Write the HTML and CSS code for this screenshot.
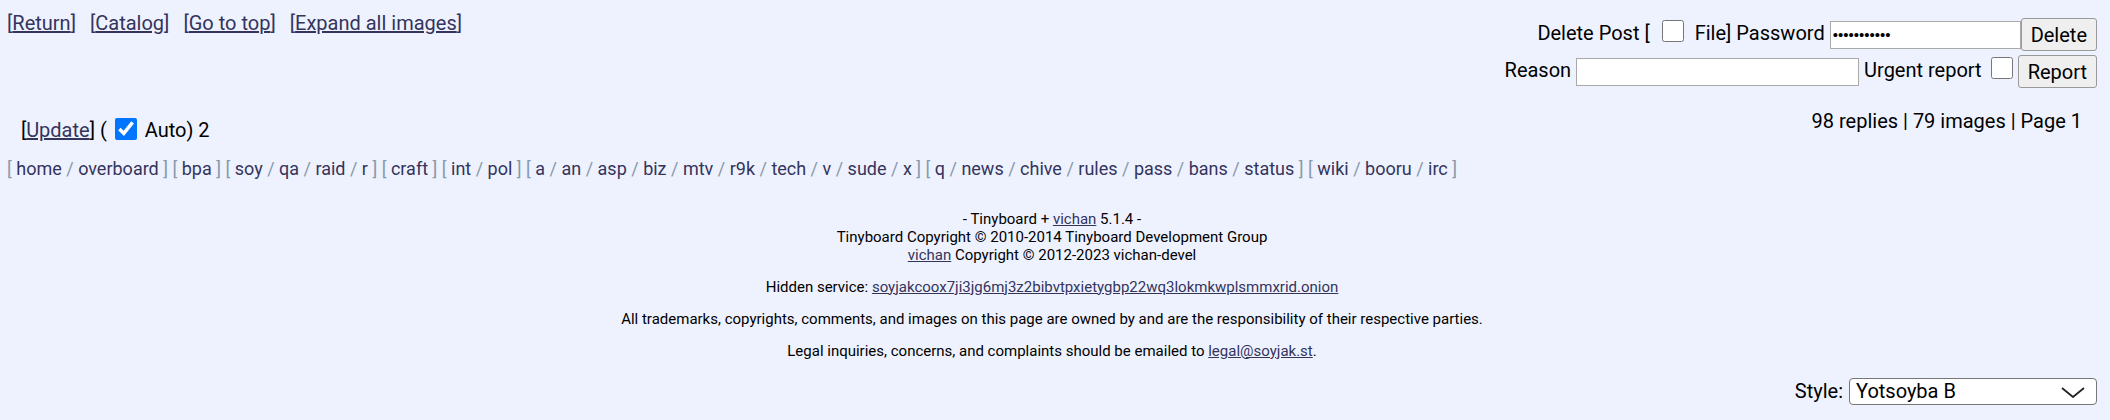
FILE: index.html
```html
<!DOCTYPE html>
<html>
<head>
    <meta name="viewport" content="width=device-width, initial-scale=1.0">
    <title>/soy/ - Thread</title>
    <link rel="stylesheet" href="styles.css">
</head>
<body>
    <div class="top-bar">
        <div class="nav-links">
            <span>[<a href="#">Return</a>]</span>
            <span>[<a href="#">Catalog</a>]</span>
            <span>[<a href="#">Go to top</a>]</span>
            <span>[<a href="#">Expand all images</a>]</span>
        </div>
        <form class="delete">
            <div class="delete-row">Delete Post [<input type="checkbox" class="box"> File] Password <input type="password" class="pass" value="abcdefghijk"><button type="button">Delete</button></div>
            <div class="delete-row">Reason <input type="text" class="reason"> Urgent report <input type="checkbox" class="box urgent"><button type="button">Report</button></div>
        </form>
    </div>
    <div class="thread-bar">
        <div class="update">[<a href="#">Update</a>] ( <input type="checkbox" class="box" checked> Auto) 2</div>
        <div class="stats">98 replies | 79 images | Page 1</div>
    </div>
    <div class="boardlist">
        <span>[ <a href="#">home</a> / <a href="#">overboard</a> ]</span>
        <span>[ <a href="#">bpa</a> ]</span>
        <span>[ <a href="#">soy</a> / <a href="#">qa</a> / <a href="#">raid</a> / <a href="#">r</a> ]</span>
        <span>[ <a href="#">craft</a> ]</span>
        <span>[ <a href="#">int</a> / <a href="#">pol</a> ]</span>
        <span>[ <a href="#">a</a> / <a href="#">an</a> / <a href="#">asp</a> / <a href="#">biz</a> / <a href="#">mtv</a> / <a href="#">r9k</a> / <a href="#">tech</a> / <a href="#">v</a> / <a href="#">sude</a> / <a href="#">x</a> ]</span>
        <span>[ <a href="#">q</a> / <a href="#">news</a> / <a href="#">chive</a> / <a href="#">rules</a> / <a href="#">pass</a> / <a href="#">bans</a> / <a href="#">status</a> ]</span>
        <span>[ <a href="#">wiki</a> / <a href="#">booru</a> / <a href="#">irc</a> ]</span>
    </div>
    <footer>
        <p>- Tinyboard + <a href="#">vichan</a> 5.1.4 -<br>
        Tinyboard Copyright &copy; 2010-2014 Tinyboard Development Group<br>
        <a href="#">vichan</a> Copyright &copy; 2012-2023 vichan-devel</p>
        <p>Hidden service: <a href="#">soyjakcoox7ji3jg6mj3z2bibvtpxietygbp22wq3lokmkwplsmmxrid.onion</a></p>
        <p>All trademarks, copyrights, comments, and images on this page are owned by and are the responsibility of their respective parties.</p>
        <p>Legal inquiries, concerns, and complaints should be emailed to <a href="#">legal@soyjak.st</a>.</p>
    </footer>
    <div class="style-select">
        Style:
        <span class="select-wrap">
            <select><option>Yotsoyba B</option></select>
            <svg class="chevron" width="24" height="11" viewBox="0 0 24 11"><path d="M1 1 L12 10 L23 1" fill="none" stroke="#222" stroke-width="1.8"/></svg>
        </span>
    </div>
</body>
</html>
```

FILE: styles.css
```css
/* Yotsuba B */
body {
    background-color: #eef2ff;
    color: #000;
    font-family: Roboto, "Liberation Sans", sans-serif;
    font-size: 20px;
    margin: 0;
    padding: 0 13px 0 7px;
}
a {
    color: #34345c;
}
.top-bar {
    display: flex;
    justify-content: space-between;
    align-items: flex-start;
}
.nav-links {
    margin-top: 11px;
    display: flex;
    gap: 14px;
    color: #34345c;
}
.delete {
    margin: 17px 0 0 0;
}
.delete-row {
    text-align: right;
    white-space: nowrap;
    height: 33px;
    line-height: 33px;
    margin-bottom: 4px;
}
.delete-row input,
.delete-row button {
    vertical-align: middle;
}
.box {
    width: 22px;
    height: 22px;
    margin: 0 3px;
    vertical-align: middle;
}
.delete-row .box {
    position: relative;
    top: -4px;
    margin: 0 6px 0 12px;
}
.delete-row .box.urgent {
    margin: 0 5px 0 4px;
}
.delete-row input[type="password"],
.delete-row input[type="text"] {
    height: 28px;
    box-sizing: border-box;
    font-size: 15px;
    border: 1px solid #a9a9a9;
    background: #fff;
    margin: 0;
}
.pass {
    width: 191px;
}
.reason {
    width: 283px;
}
button {
    font-family: Roboto, "Liberation Sans", sans-serif;
    font-size: 20px;
    height: 33px;
    padding: 1px 9px;
    margin: 0;
    background: #efefef;
    border: 1px solid #999;
    border-radius: 3px;
    color: #000;
}
.thread-bar {
    display: flex;
    justify-content: space-between;
    align-items: flex-start;
    margin-top: 15px;
}
.update {
    margin: 12px 0 0 14px;
    white-space: nowrap;
}
.update .box {
    position: relative;
    top: -3px;
}
.stats {
    margin: 3px 15px 0 0;
}
.boardlist {
    color: #89a;
    font-size: 18px;
    margin-top: 15px;
}
.boardlist a {
    color: #34345c;
    text-decoration: none;
}
footer {
    margin-top: 31px;
    font-size: 15px;
    text-align: center;
}
footer p {
    margin: 0 0 14px;
    line-height: 18px;
}
.style-select {
    display: flex;
    justify-content: flex-end;
    align-items: center;
    gap: 6px;
    margin-top: 18px;
}
.select-wrap {
    position: relative;
    display: block;
    height: 27px;
}
.style-select select {
    appearance: none;
    -webkit-appearance: none;
    width: 248px;
    height: 27px;
    padding: 0 6px;
    font-family: Roboto, "Liberation Sans", sans-serif;
    font-size: 20px;
    color: #000;
    background: #fff;
    border: 1px solid #767676;
    border-radius: 4px;
}
.chevron {
    position: absolute;
    right: 12px;
    top: 9px;
    pointer-events: none;
}
```
